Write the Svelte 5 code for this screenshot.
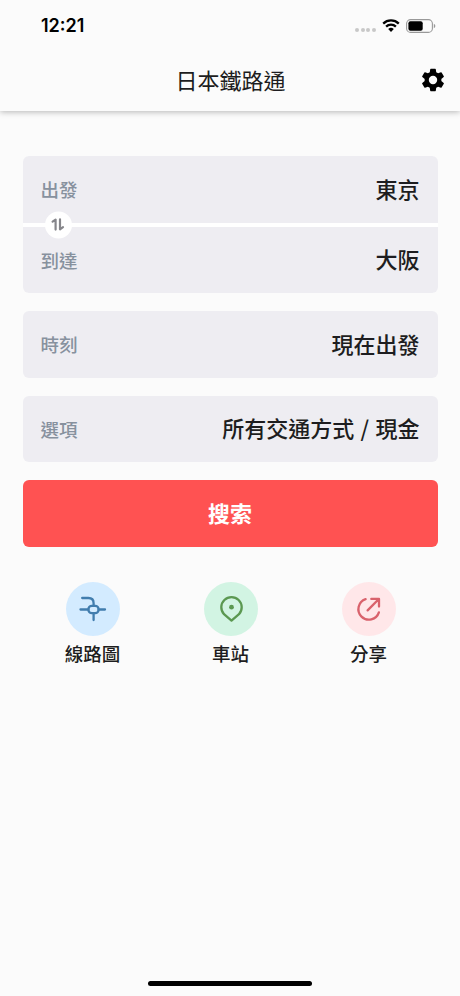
<script lang="ts">
    type Action = { icon: "map" | "station" | "share", label: string };

    let from = $state("東京");
    let to = $state("大阪");

    const options = [
        { label: "時刻", value: "現在出發" },
        { label: "選項", value: "所有交通方式 / 現金" },
    ];
    const actions: Action[] = [
        { icon: "map", label: "線路圖" },
        { icon: "station", label: "車站" },
        { icon: "share", label: "分享" },
    ];

    function swap() {
        [from, to] = [to, from];
    }
</script>

<div class="screen">
    <header>
        <div class="status">
            <span class="time">12:21</span>
            <div class="indicators">
                <div class="signal"><i></i><i></i><i></i><i></i></div>
                <svg class="wifi" viewBox="0 0 18 13">
                    <path d="M1.2 4.6a11.2 11.2 0 0 1 15.6 0M4.1 7.6a7 7 0 0 1 9.8 0" fill="none" stroke="#000" stroke-width="2.3" />
                    <path d="M9 13 6.2 10.1a4 4 0 0 1 5.6 0Z" />
                </svg>
                <svg class="battery" viewBox="0 0 30 14">
                    <rect x=".6" y=".6" width="25.8" height="12.8" rx="4" fill="none" stroke="#999" stroke-width="1.1" />
                    <rect x="2.4" y="2.3" width="14.3" height="9.4" rx="2" />
                    <path d="M27.8 4.8q1.6.7 1.6 2.2t-1.6 2.2Z" fill="#999" />
                </svg>
            </div>
        </div>
        <div class="bar">
            <h1>日本鐵路通</h1>
            <button class="settings" aria-label="設定">
                <svg viewBox="0 0 24 24">
                    <path d="M19.14 12.94c.04-.3.06-.61.06-.94s-.02-.64-.07-.94l2.03-1.58a.49.49 0 0 0 .12-.61l-1.92-3.32a.49.49 0 0 0-.59-.22l-2.39.96a7 7 0 0 0-1.62-.94l-.36-2.54A.48.48 0 0 0 13.92 2.4h-3.84a.48.48 0 0 0-.47.41l-.36 2.54a7.4 7.4 0 0 0-1.62.94l-2.39-.96a.48.48 0 0 0-.59.22L2.74 8.87a.47.47 0 0 0 .12.61l2.03 1.58a6 6 0 0 0-.02 1.88l-2.03 1.58a.49.49 0 0 0-.12.61l1.92 3.32c.12.22.37.29.59.22l2.39-.96c.5.38 1.03.7 1.62.94l.36 2.54c.05.24.24.41.48.41h3.84c.24 0 .44-.17.47-.41l.36-2.54a7 7 0 0 0 1.62-.94l2.39.96c.22.08.47 0 .59-.22l1.92-3.32a.47.47 0 0 0-.12-.61ZM12 15.6a3.6 3.6 0 1 1 0-7.2 3.6 3.6 0 0 1 0 7.2Z" />
                </svg>
            </button>
        </div>
    </header>

    <main>
        <div class="route">
            <div class="field">
                <span class="label">出發</span>
                <span class="value">{from}</span>
            </div>
            <div class="field">
                <span class="label">到達</span>
                <span class="value">{to}</span>
            </div>
            <button class="swap" aria-label="交換" onclick={swap}>
                <svg viewBox="0 0 16 16">
                    <path d="M2.6 5.2 5.6 3.1V13.1M10 2.9V12.8L13 10.6" />
                </svg>
            </button>
        </div>

        {#each options as { label, value }}
            <div class="field">
                <span class="label">{label}</span>
                <span class="value">{value}</span>
            </div>
        {/each}

        <button class="search">搜索</button>

        <nav>
            {#each actions as { icon, label }}
                <button class="action">
                    <span class={["circle", icon]}>
                        <svg viewBox="0 0 28 28">
                            {#if icon === "map"}
                                <path d="M3.2 3H9.4Q14.6 3 14.6 8.2V10.8M1.5 14.5H9.4M19.6 14.5H26M14.6 18.2V25" />
                                <rect x="9.4" y="10.9" width="10.2" height="7.2" rx="3.4" />
                            {:else if icon === "station"}
                                <path d="M14.5 25.6 7 19.2A10.2 10.2 0 1 1 22 19.2Z" />
                                <circle class="dot" cx="14.5" cy="12.2" r="2.4" />
                            {:else}
                                <path d="M10.6 4.2A10.5 10.5 0 1 0 23.9 17.4M12.6 15.4 23.6 4.2M16.3 3.9H24V11.6" />
                            {/if}
                        </svg>
                    </span>
                    {label}
                </button>
            {/each}
        </nav>
    </main>

    <div class="home"></div>
</div>

<style>
    :global(body) {
        background: #fbfbfb;
    }

    .screen {
        display: flex;
        flex-direction: column;
        height: 996px;
        box-sizing: border-box;
        padding-bottom: 10px;
        background: #fbfbfb;
        color: #1d1d20;
        font-family: "Noto Sans CJK TC", sans-serif;
    }

    button {
        padding: 0;
        border: none;
        background: none;
        color: inherit;
        font: inherit;
        cursor: pointer;
    }

    svg {
        display: block;
    }

    header {
        height: 111px;
        box-shadow: 0 1px 6px rgba(0, 0, 0, 0.28);
    }

    .status {
        display: flex;
        align-items: center;
        justify-content: space-between;
        height: 51px;
        padding: 0 24px 0 41px;
    }

    .time {
        font: 600 18px/51px Inter, sans-serif;
        color: #000;
    }

    .indicators {
        display: flex;
        align-items: center;
    }

    .signal {
        display: flex;
        gap: 1.7px;
        margin: 9px 6px 0 0;
    }

    .signal i {
        width: 4px;
        height: 4px;
        border-radius: 50%;
        background: #c8c8c8;
    }

    .wifi {
        width: 18px;
        height: 13px;
        margin-right: 6px;
    }

    .battery {
        width: 30px;
        height: 14px;
    }

    .bar {
        display: grid;
        grid-template-columns: 1fr auto 1fr;
        align-items: center;
        height: 57px;
        padding: 0 13px 0 14px;
    }

    h1 {
        grid-column: 2;
        margin: 0;
        font-size: 22px;
        font-weight: 400;
        line-height: 57px;
    }

    .settings {
        justify-self: end;
        color: #000;
    }

    .settings svg {
        width: 28px;
        height: 28px;
    }

    main {
        display: flex;
        flex-direction: column;
        gap: 18px;
        padding: 45px 22.5px 0;
    }

    .route {
        position: relative;
        display: flex;
        flex-direction: column;
        gap: 4px;
        border-radius: 7px;
        background: #fff;
    }

    .field {
        display: flex;
        align-items: center;
        justify-content: space-between;
        height: 66.5px;
        padding: 0 18px;
        border-radius: 6px;
        background: #eeedf2;
    }

    .route .field:first-child {
        border-radius: 6px 6px 0 0;
    }

    .route .field:nth-child(2) {
        border-radius: 0 0 6px 6px;
    }

    .label {
        font-size: 18.5px;
        font-weight: 500;
        color: #87919e;
    }

    .value {
        padding-bottom: 3px;
        font-size: 22px;
        font-weight: 500;
        word-spacing: 1.4px;
    }

    /* sits over the gap between the two stations */
    .swap {
        position: absolute;
        top: 50%;
        left: 22px;
        display: grid;
        place-items: center;
        width: 27px;
        height: 27px;
        border-radius: 50%;
        background: #fff;
        transform: translateY(-50%);
    }

    .swap svg {
        width: 16px;
        height: 16px;
        fill: none;
        stroke: #86868b;
        stroke-width: 2.2;
        stroke-linecap: round;
        stroke-linejoin: round;
    }

    .search {
        height: 66.5px;
        padding-bottom: 2px;
        border-radius: 6px;
        background: #ff5252;
        color: #fff;
        font-size: 22px;
        font-weight: 700;
    }

    nav {
        display: grid;
        grid-template-columns: repeat(3, 1fr);
        padding: 17.5px 0 0 1px;
    }

    .action {
        display: flex;
        flex-direction: column;
        align-items: center;
        gap: 4px;
        font-size: 18.5px;
        font-weight: 500;
        line-height: 27px;
    }

    .circle {
        display: grid;
        place-items: center;
        width: 54px;
        height: 54px;
        border-radius: 50%;
    }

    .circle svg {
        width: 28px;
        height: 28px;
        fill: none;
        stroke: currentColor;
        stroke-width: 2.3;
        stroke-linecap: round;
        stroke-linejoin: round;
    }

    .circle .dot {
        fill: currentColor;
        stroke: none;
    }

    .map {
        background: #d3ebff;
        color: #417dae;
    }

    .station {
        background: #d2f4e3;
        color: #5b9851;
    }

    .share {
        background: #ffe7e9;
        color: #d9626c;
    }

    .home {
        width: 164px;
        height: 5px;
        margin: auto auto 0;
        border-radius: 3px;
        background: #000;
    }
</style>
